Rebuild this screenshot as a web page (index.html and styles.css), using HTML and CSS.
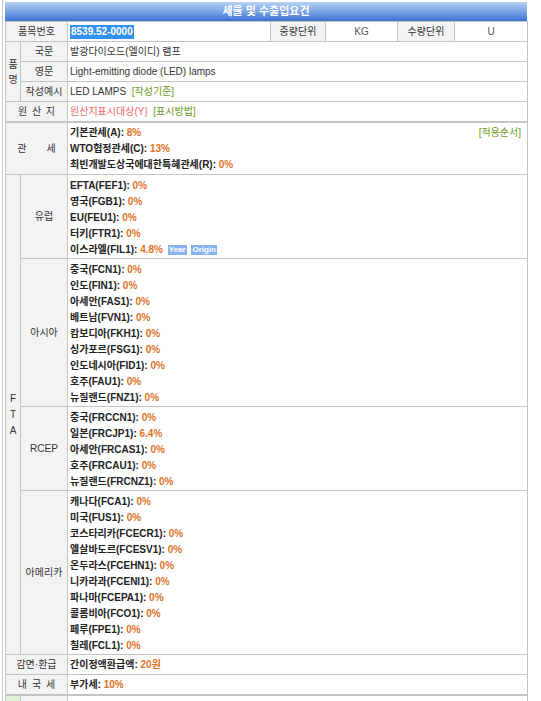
FILE: index.html
```html
<!DOCTYPE html>
<html lang="ko">
<head>
<meta charset="utf-8">
<title>세율 및 수출입요건</title>
<link rel="stylesheet" href="styles.css">
</head>
<body>
<div class="page">
  <div class="title">세율 및 수출입요건</div>
  <table class="grid">
    <colgroup>
      <col class="c-narrow"><col class="c-label"><col class="c-value">
      <col class="c-u1"><col class="c-u2"><col class="c-u3"><col class="c-u4">
    </colgroup>
    <tr>
      <td class="lb" colspan="2">품목번호</td>
      <td class="val"><span class="sel">8539.52-0000</span></td>
      <td class="lb">중량단위</td>
      <td class="unit">KG</td>
      <td class="lb">수량단위</td>
      <td class="unit">U</td>
    </tr>
    <tr class="dot">
      <td class="lb vert" rowspan="3">품<br>명</td>
      <td class="lb">국문</td>
      <td class="val" colspan="5">발광다이오드(엘이디) 램프</td>
    </tr>
    <tr class="dot">
      <td class="lb">영문</td>
      <td class="val" colspan="5">Light-emitting diode (LED) lamps</td>
    </tr>
    <tr>
      <td class="lb">작성예시</td>
      <td class="val" colspan="5">LED LAMPS&nbsp;&nbsp;<span class="green">[작성기준]</span></td>
    </tr>
    <tr class="thick">
      <td class="lb spaced" colspan="2">원 산 지</td>
      <td class="val" colspan="5"><span class="pink">원산지표시대상(Y)</span>&nbsp;&nbsp;<span class="green">[표시방법]</span></td>
    </tr>
    <tr>
      <td class="lb" colspan="2">관&emsp;&emsp;세</td>
      <td class="val list tariff" colspan="5">
        <span class="green order">[적용순서]</span>
        <div><b>기본관세(A):</b> <em>8%</em></div>
        <div><b>WTO협정관세(C):</b> <em>13%</em></div>
        <div><b>최빈개발도상국에대한특혜관세(R):</b> <em>0%</em></div>
      </td>
    </tr>
    <tr class="dot">
      <td class="lb vert fta" rowspan="4">F<br>T<br>A</td>
      <td class="lb">유럽</td>
      <td class="val list" colspan="5">
        <div><b>EFTA(FEF1):</b> <em>0%</em></div>
        <div><b>영국(FGB1):</b> <em>0%</em></div>
        <div><b>EU(FEU1):</b> <em>0%</em></div>
        <div><b>터키(FTR1):</b> <em>0%</em></div>
        <div><b>이스라엘(FIL1):</b> <em>4.8%</em> <span class="badge">Year</span> <span class="badge">Origin</span></div>
      </td>
    </tr>
    <tr class="dot">
      <td class="lb">아시아</td>
      <td class="val list" colspan="5">
        <div><b>중국(FCN1):</b> <em>0%</em></div>
        <div><b>인도(FIN1):</b> <em>0%</em></div>
        <div><b>아세안(FAS1):</b> <em>0%</em></div>
        <div><b>베트남(FVN1):</b> <em>0%</em></div>
        <div><b>캄보디아(FKH1):</b> <em>0%</em></div>
        <div><b>싱가포르(FSG1):</b> <em>0%</em></div>
        <div><b>인도네시아(FID1):</b> <em>0%</em></div>
        <div><b>호주(FAU1):</b> <em>0%</em></div>
        <div><b>뉴질랜드(FNZ1):</b> <em>0%</em></div>
      </td>
    </tr>
    <tr class="dot">
      <td class="lb">RCEP</td>
      <td class="val list" colspan="5">
        <div><b>중국(FRCCN1):</b> <em>0%</em></div>
        <div><b>일본(FRCJP1):</b> <em>6.4%</em></div>
        <div><b>아세안(FRCAS1):</b> <em>0%</em></div>
        <div><b>호주(FRCAU1):</b> <em>0%</em></div>
        <div><b>뉴질랜드(FRCNZ1):</b> <em>0%</em></div>
      </td>
    </tr>
    <tr>
      <td class="lb">아메리카</td>
      <td class="val list" colspan="5">
        <div><b>캐나다(FCA1):</b> <em>0%</em></div>
        <div><b>미국(FUS1):</b> <em>0%</em></div>
        <div><b>코스타리카(FCECR1):</b> <em>0%</em></div>
        <div><b>엘살바도르(FCESV1):</b> <em>0%</em></div>
        <div><b>온두라스(FCEHN1):</b> <em>0%</em></div>
        <div><b>니카라과(FCENI1):</b> <em>0%</em></div>
        <div><b>파나마(FCEPA1):</b> <em>0%</em></div>
        <div><b>콜롬비아(FCO1):</b> <em>0%</em></div>
        <div><b>페루(FPE1):</b> <em>0%</em></div>
        <div><b>칠레(FCL1):</b> <em>0%</em></div>
      </td>
    </tr>
    <tr>
      <td class="lb" colspan="2">감면·환급</td>
      <td class="val" colspan="5"><b>간이정액환급액:</b> <em>20원</em></td>
    </tr>
    <tr class="thick">
      <td class="lb" colspan="2">내&ensp;국&ensp;세</td>
      <td class="val" colspan="5"><b>부가세:</b> <em>10%</em></td>
    </tr>
    <tr>
      <td class="lb greenbox"></td>
      <td class="lb"></td>
      <td class="val" colspan="5"></td>
    </tr>
  </table>
</div>
</body>
</html>
```
FILE: styles.css
```css
html, body {
  margin: 0;
  padding: 0;
  background: #fff;
}
body {
  font: 10px "Liberation Sans", "Noto Sans CJK KR", sans-serif;
  color: #333;
  overflow: hidden;
}
.page {
  margin-left: 2px;
  border-left: 1px solid #c8c8c8;
  padding: 2px 0 0 2px;
  width: 522px;
  min-height: 701px;
}
.title {
  height: 19px;
  line-height: 19px;
  background: linear-gradient(#b8d3f5, #3b74d4);
  color: #fff;
  font-weight: bold;
  font-size: 11px;
  text-align: center;
}
.grid {
  width: 522px;
  table-layout: fixed;
  border-collapse: collapse;
}
.c-narrow { width: 15px; }
.c-label { width: 47px; }
.c-value { width: 203px; }
.c-u1 { width: 55px; }
.c-u2 { width: 72px; }
.c-u3 { width: 57px; }
.c-u4 { width: 73px; }
.grid td {
  border: 1px solid #c4c4c4;
  padding: 0 2px;
  height: 19px;
  line-height: 16px;
  vertical-align: middle;
  white-space: nowrap;
  overflow: hidden;
}
.grid .lb {
  background: #f3f3f3;
  text-align: center;
  color: #333;
  padding: 0;
}
.grid .vert {
  line-height: 15px;
}
.grid .fta {
  line-height: 16px;
}
.spaced {
  word-spacing: 2px;
}
.unit {
  text-align: center;
  color: #555;
}
.grid tr.dot td:not(.vert) {
  border-bottom: 1px dotted #b4b4b4;
}
.grid tr.thick td {
  border-bottom: 2px solid #c4c4c4;
}
.grid .list {
  vertical-align: top;
  padding-top: 3px;
  padding-bottom: 0;
}
.grid .tariff {
  padding-top: 2px;
  padding-bottom: 1px;
}
.list div {
  height: 16px;
  line-height: 16px;
}
b {
  font-weight: bold;
  color: #222;
}
em {
  font-style: normal;
  font-weight: bold;
  color: #e0731f;
}
.sel {
  background: #3391f0;
  color: #fff;
  font-weight: bold;
  padding: 1px 1px 2px;
}
.green {
  color: #6e9a22;
}
.pink {
  color: #f06a6a;
}
.order {
  float: right;
  margin-right: 4px;
  line-height: 16px;
}
.badge {
  display: inline-block;
  background: #86b3f0;
  color: #fff;
  font-size: 8px;
  line-height: 10px;
  padding: 0 1px;
  vertical-align: 1px;
  font-weight: bold;
  margin-left: 2px;
}
.grid .greenbox {
  background: #e3f1d6;
}
```
